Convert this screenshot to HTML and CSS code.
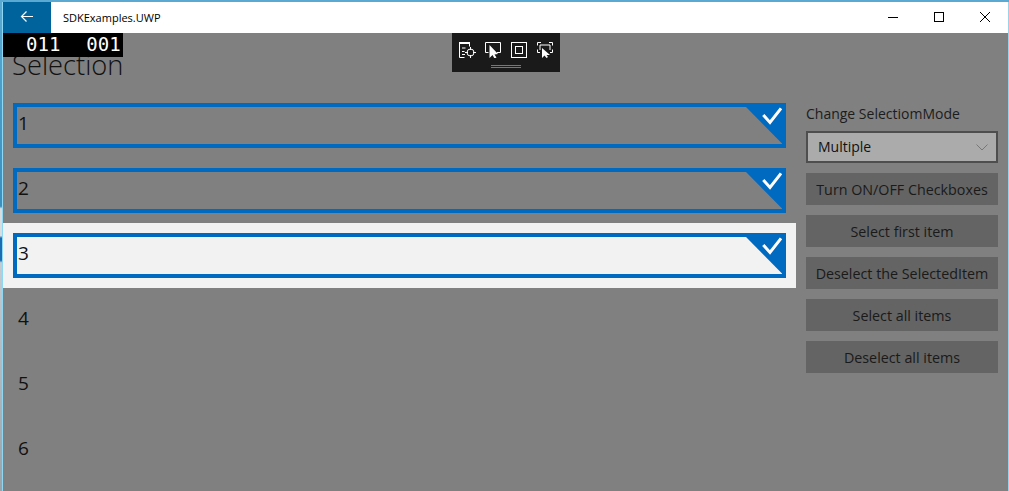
FILE: index.html
```html
<!DOCTYPE html>
<html lang="en">
<head>
<meta charset="utf-8">
<title>SDKExamples.UWP</title>
<link rel="stylesheet" href="styles.css">
</head>
<body>
<div class="window">
  <header class="titlebar">
    <div class="back"><svg width="16" height="15" viewBox="0 0 16 15"><path d="M14 6.500H2.500M7.500 1.500L2.500 6.500L7.500 11.500" fill="none" stroke="#fff" stroke-width="1.200"/></svg></div>
    <div class="app-title">SDKExamples.UWP</div>
    <div class="caption">
      <span class="cap-btn"><svg width="12" height="13" viewBox="0 0 12 13"><path d="M1 6.500H11" stroke="#000" stroke-width="1"/></svg></span>
      <span class="cap-btn"><svg width="12" height="13" viewBox="0 0 12 13"><rect x="1.500" y="1.500" width="9" height="9" fill="none" stroke="#000"/></svg></span>
      <span class="cap-btn"><svg width="12" height="13" viewBox="0 0 12 13"><path d="M1 1L11 11M11 1L1 11" stroke="#000" stroke-width="1"/></svg></span>
    </div>
  </header>
  <main class="content">
    <section class="list-col">
      <h1 class="page-title">Selection</h1>
      <div class="list">
        <div class="row"><div class="item sel"><span class="num">1</span><svg class="corner" width="36" height="37" viewBox="0 0 36 37"><path d="M0 0H36V36.500Z" fill="#0069c0"/><path d="M17.300 8L24 15.500L35 1.300" fill="none" stroke="#fff" stroke-width="3"/></svg></div></div>
        <div class="row"><div class="item sel"><span class="num">2</span><svg class="corner" width="36" height="37" viewBox="0 0 36 37"><path d="M0 0H36V36.500Z" fill="#0069c0"/><path d="M17.300 8L24 15.500L35 1.300" fill="none" stroke="#fff" stroke-width="3"/></svg></div></div>
        <div class="row hover"><div class="item sel"><span class="num">3</span><svg class="corner" width="36" height="37" viewBox="0 0 36 37"><path d="M0 0H36V36.500Z" fill="#0069c0"/><path d="M17.300 8L24 15.500L35 1.300" fill="none" stroke="#fff" stroke-width="3"/></svg></div></div>
        <div class="row"><div class="item"><span class="num">4</span></div></div>
        <div class="row"><div class="item"><span class="num">5</span></div></div>
        <div class="row"><div class="item"><span class="num">6</span></div></div>
      </div>
    </section>
    <aside class="side">
      <div class="side-label">Change SelectiomMode</div>
      <div class="combo"><span class="combo-text">Multiple</span><svg width="12" height="7" viewBox="0 0 12 7"><path d="M.5 .5L6 6L11.500 .5" fill="none" stroke="#777"/></svg></div>
      <div class="btn">Turn ON/OFF Checkboxes</div>
      <div class="btn">Select first item</div>
      <div class="btn">Deselect the SelectedItem</div>
      <div class="btn">Select all items</div>
      <div class="btn">Deselect all items</div>
    </aside>
  </main>
  <div class="counter"><span>011</span><span>001</span></div>
  <div class="debugbar">
    <div class="dbg-icons">
      <svg width="17" height="16" viewBox="0 0 17 16"><path d="M0 1H11" stroke="#fff" stroke-width="2"/><path d="M.5 1V15.500H5.500M10.500 1V4.500M3 6H6.500M3 9.500H5.500M3 12.500H6" fill="none" stroke="#fff"/><circle cx="11.500" cy="10.500" r="3.500" fill="none" stroke="#fff"/><path d="M11.500 5V8M11.500 13V16M6 10.500H9M14 10.500H17" stroke="#fff"/></svg>
      <svg class="dbg-next" width="16" height="16" viewBox="0 0 16 16"><path d="M3.500 10.500H.5V.5H15.500V10.500H12" fill="none" stroke="#fff"/><path d="M4.500 3V16L7.500 13L9.500 16.500L11.500 15.500L9.500 12.500L13 12Z" fill="#fff"/></svg>
      <svg width="16" height="16" viewBox="0 0 16 16"><rect x=".5" y=".5" width="15" height="15" fill="none" stroke="#fff"/><rect x="4.500" y="4.500" width="7" height="7" fill="none" stroke="#fff"/></svg>
      <svg width="16" height="16" viewBox="0 0 16 16"><path d="M.5 3.500V.5H4M12 .5H15.500V3.500M.5 7.500V10.500H3M15.500 7.500V10.500H13M3 8V3H13V8" fill="none" stroke="#fff"/><path d="M5 6V16L7.500 13.500L9.500 16L11 15L9.500 13H13Z" fill="#fff"/></svg>
    </div>
    <div class="dbg-grip"></div>
  </div>
</div>
</body>
</html>
```
FILE: styles.css
```css
* { box-sizing: border-box; }
html, body { margin: 0; height: 100%; }
body {
  background: linear-gradient(180deg, #5aa9d2 0, #3a8fbd 42%, #d9dde0 42.5%, #d9dde0 48%, #1a6db0 48.500%, #1a6db0 53%, #c4ccd2 53.500%, #9aa3a8 100%);
  overflow: hidden;
  font-family: "Open Sans", "Noto Sans", sans-serif;
  color: #111;
}
.window {
  position: relative;
  margin: 2px 0 0 2px;
  border-left: 1px solid #8fd8f5;
  border-right: 1px solid #9fd0ea;
  height: 489px;
  background: #808080;
  overflow: hidden;
}
.titlebar {
  display: flex;
  align-items: center;
  height: 31px;
  background: #fff;
}
.back {
  width: 48px;
  height: 31px;
  display: flex;
  align-items: center;
  justify-content: center;
  background: #00639c;
}
.app-title {
  flex: 1;
  padding-left: 12px;
  font-size: 11px;
  color: #000;
}
.caption { display: flex; }
.cap-btn {
  width: 46px;
  height: 31px;
  display: flex;
  align-items: center;
  justify-content: center;
}
.content { display: flex; }
.list-col { width: 793px; flex: none; }
.page-title {
  margin: 0;
  height: 60px;
  padding: 14px 0 0 9px;
  font-size: 27.300px;
  line-height: 36px;
  font-weight: 300;
  color: #111;
}
.row { height: 65px; padding: 10px; }
.row.hover { background: #f2f2f2; }
.item {
  position: relative;
  height: 45px;
  border: 4px solid transparent;
  display: flex;
  align-items: center;
  padding-bottom: 6px;
}
.item.sel { border-color: #0069c0; }
.num { font-size: 19px; line-height: 26px; padding-left: 1px; color: #111; }
.corner { position: absolute; top: 0; right: 0; }
.side {
  margin-left: 10px;
  width: 192px;
  display: flex;
  flex-direction: column;
  gap: 10px;
  padding-top: 67px;
}
.side-label { font-size: 14px; line-height: 20px; color: #1c1c1c; margin-top: 4px; margin-bottom: -3px; }
.combo {
  height: 32px;
  display: flex;
  align-items: center;
  justify-content: space-between;
  padding: 0 8px 0 10px;
  background: #ababab;
  border: 2px solid #4e4e4e;
  font-size: 14px;
}
.combo-text { margin-top: -2px; }
.btn {
  height: 32px;
  display: flex;
  align-items: center;
  justify-content: center;
  background: #646464;
  font-size: 14.300px;
  white-space: nowrap;
  color: #1a1a1a;
}
.counter {
  position: absolute;
  left: 0;
  top: 31px;
  width: 120px;
  height: 24px;
  background: #000;
  color: #fff;
  display: flex;
  gap: 26px;
  padding-left: 23px;
  font-family: "DejaVu Sans Mono", monospace;
  font-size: 19px;
  line-height: 22px;
  font-weight: 400;
}
.debugbar {
  position: absolute;
  left: 449px;
  top: 31px;
  width: 108px;
  height: 39px;
  background: #1a1a1a;
}
.dbg-icons { display: flex; gap: 10px; padding: 9px 0 0 7px; align-items: flex-start; }
.dbg-next { margin-left: -1px; }
.dbg-grip {
  width: 30px;
  height: 3px;
  margin: 7px auto 0;
  border-top: 1px solid #777;
  border-bottom: 1px solid #777;
}
```
